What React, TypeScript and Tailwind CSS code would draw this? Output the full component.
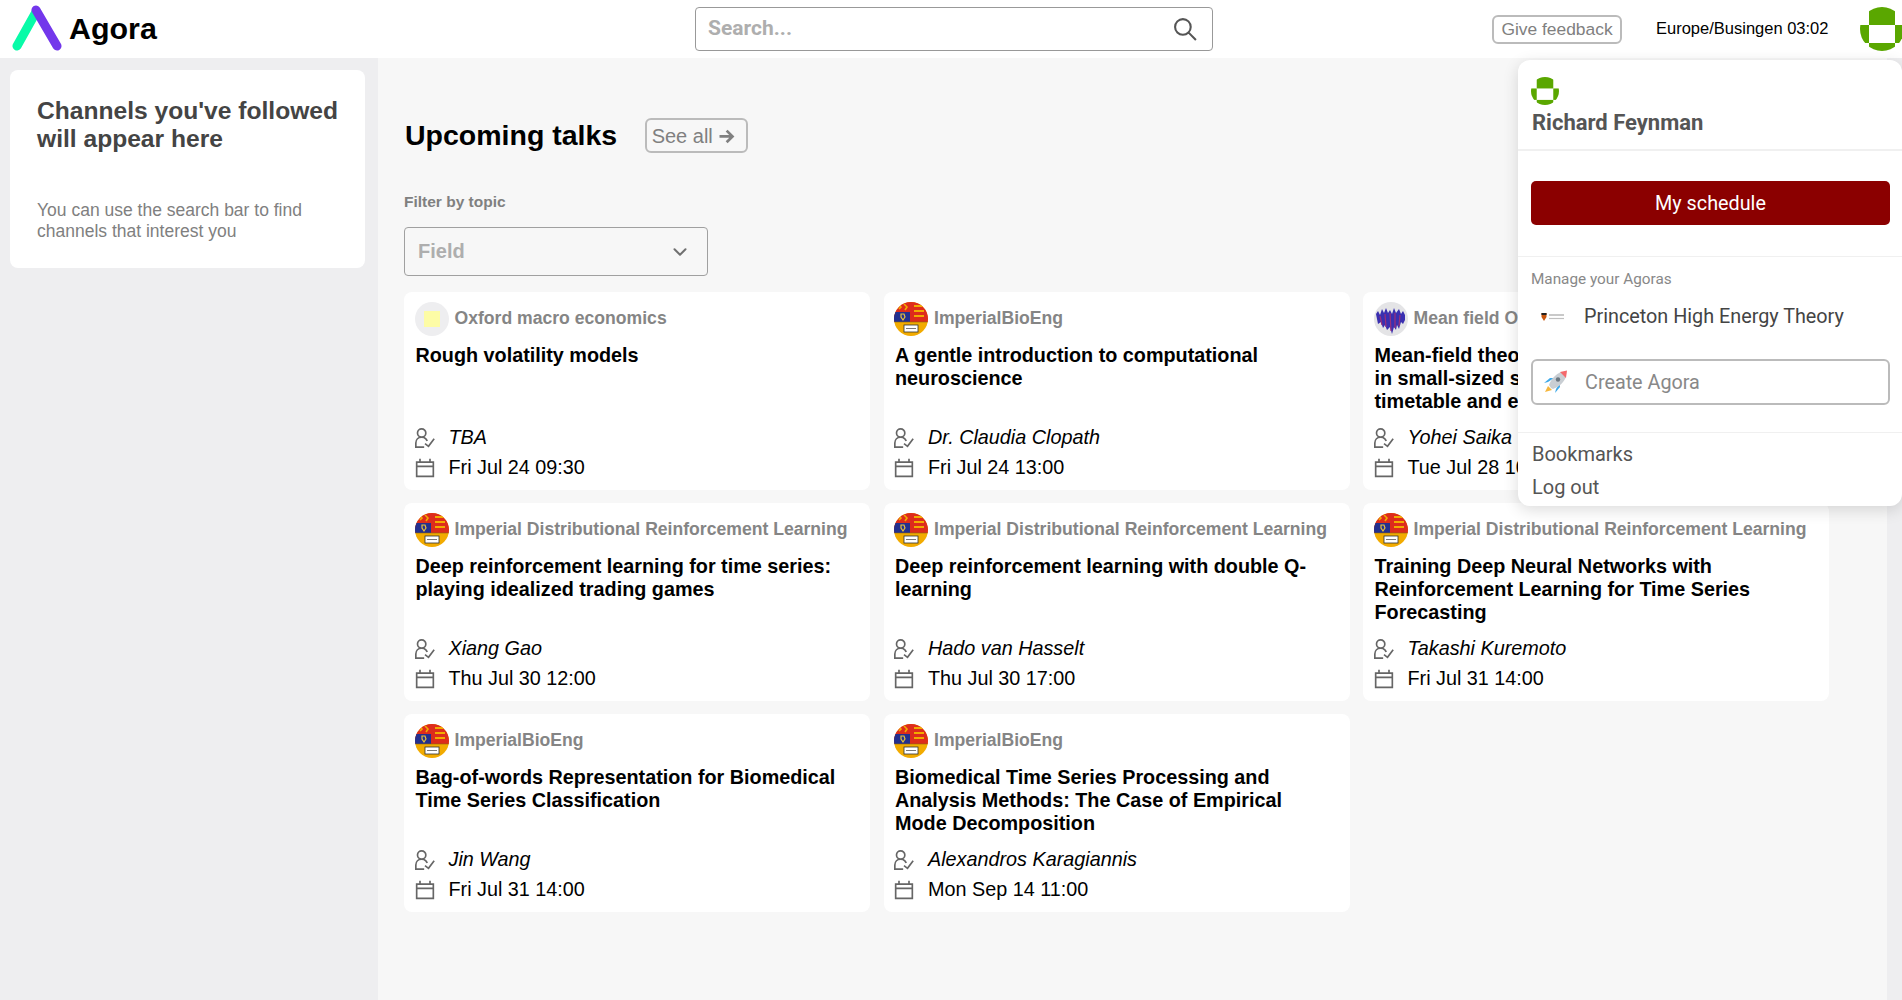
import React from "react";
import { GrUserExpert, GrCalendar, GrSearch, GrFormNextLink } from "react-icons/gr";
import { ChevronDown } from "lucide-react";

function UserAvatar({ className, id }: { className: string; id: string }) {
  return (
    <svg viewBox="0 0 44 44" className={className}>
      <clipPath id={id}><circle cx="22" cy="22" r="22" /></clipPath>
      <g clipPath={`url(#${id})`} fill="#5aa700">
        <rect x="9" y="0" width="26" height="18" />
        <rect x="0" y="18" width="9" height="18" />
        <rect x="35" y="18" width="9" height="18" />
        <rect x="9" y="36" width="26" height="8" />
      </g>
    </svg>
  );
}

function Logo() {
  return (
    <svg viewBox="0 0 50 48" className="w-[50px] h-[48px] shrink-0">
      <path d="M5 42 L24 8" stroke="#08fba8" strokeWidth="9" strokeLinecap="round" fill="none" />
      <path d="M24 6 L45 42" stroke="#7337eb" strokeWidth="9" strokeLinecap="round" fill="none" />
    </svg>
  );
}

function ImperialAvatar() {
  return (
    <svg viewBox="0 0 34 34" className="w-[34px] h-[34px] shrink-0">
      <clipPath id="imp"><circle cx="17" cy="17" r="17" /></clipPath>
      <g clipPath="url(#imp)">
        <rect width="34" height="34" fill="#f2ab00" />
        <rect width="34" height="20" fill="#dd2c1c" />
        <rect y="10" width="16" height="10" fill="#23308f" />
        <path d="M7 12 L10 12 L11 15 L9 18 L7 15 Z" fill="none" stroke="#e9c23a" strokeWidth="1.2" />
        <path d="M4 3l3 2 -2 2M10 2l3 3 -2 3" stroke="#f2ab00" strokeWidth="1.6" fill="none" />
        <path d="M20 4h10M20 9h10M20 14h10" stroke="#f2ab00" strokeWidth="2" />
        <path d="M0 20h34" stroke="#8a6a10" strokeWidth="0.6" />
        <rect x="10" y="23" width="14" height="7" fill="#fff" stroke="#333" strokeWidth="0.8" />
        <path d="M12 26.500h10" stroke="#555" strokeWidth="0.8" />
      </g>
    </svg>
  );
}

function OxfordAvatar() {
  return (
    <div className="w-[34px] h-[34px] shrink-0 rounded-full bg-[#eeeef0] flex items-center justify-center">
      <div className="w-4 h-4 bg-[#fdfca6]" />
    </div>
  );
}

function MeanFieldAvatar() {
  return (
    <svg viewBox="0 0 34 34" className="w-[34px] h-[34px] shrink-0">
      <circle cx="17" cy="17" r="17" fill="#e4e4e6" />
      <path d="M2 12 L4 9 L6 13 L8 7 L10 11 L12 6 L14 11 L16 8 L18 12 L20 6 L22 11 L25 7 L27 12 L29 9 L31 13 L31 18 L29 22 L27 20 L25 27 L23 23 L22 28 L20 25 L18 32 L16 25 L13 28 L11 23 L9 26 L7 20 L4 22 Z" fill="#3a2fb0" />
      <path d="M6 14 L8 23 M11 12 L12 25 M16 11 L17 29 M21 11 L21 26 M26 13 L25 24" stroke="#9a2f7a" strokeWidth="1.2" />
    </svg>
  );
}

function Rocket() {
  return (
    <svg viewBox="0 0 26 24" className="w-[26px] h-6 shrink-0">
      <path d="M2 22 L5 16 L9 20 Z" fill="#f6b73c" />
      <path d="M5 12 L1 13 L7 8 L11 8 Z" fill="#3fa9e8" />
      <path d="M13 19 L12 23 L17 17 L17 13 Z" fill="#3fa9e8" />
      <path d="M8 18 L6 15 C8 9 13 4 18 2 L23 7 C21 12 16 17 10 19 Z" fill="#c9ced3" />
      <path d="M17 2 L24 0.5 L23 8 Z" fill="#f4686c" />
      <circle cx="15" cy="9.5" r="2.2" fill="#6b7780" />
    </svg>
  );
}

function PrincetonMini() {
  return (
    <svg viewBox="0 0 25 8" className="w-[25px] h-2 shrink-0">
      <path d="M0.500 0h5v4l-2.500 4l-2.500-4z" fill="#c9560e" />
      <path d="M0.500 0h5v2h-5z" fill="#222" />
      <path d="M8 2h15" stroke="#a5a5a5" strokeWidth="1.2" />
      <path d="M8 5.500h15" stroke="#c0c0c0" strokeWidth="1.2" />
    </svg>
  );
}

type Talk = { avatar: React.ReactNode; channel: string; title: React.ReactNode; speaker: string; date: string };

const imperialDRL = "Imperial Distributional Reinforcement Learning";
const talks: Talk[] = [
  { avatar: <OxfordAvatar />, channel: "Oxford macro economics", title: "Rough volatility models", speaker: "TBA", date: "Fri Jul 24 09:30" },
  { avatar: <ImperialAvatar />, channel: "ImperialBioEng", title: "A gentle introduction to computational neuroscience", speaker: "Dr. Claudia Clopath", date: "Fri Jul 24 13:00" },
  { avatar: <MeanFieldAvatar />, channel: "Mean field Optimization", title: <>Mean-field theory of optimization problems<br />in small-sized systems with a fixed<br />timetable and external noise</>, speaker: "Yohei Saika", date: "Tue Jul 28 10:00" },
  { avatar: <ImperialAvatar />, channel: imperialDRL, title: "Deep reinforcement learning for time series: playing idealized trading games", speaker: "Xiang Gao", date: "Thu Jul 30 12:00" },
  { avatar: <ImperialAvatar />, channel: imperialDRL, title: "Deep reinforcement learning with double Q-learning", speaker: "Hado van Hasselt", date: "Thu Jul 30 17:00" },
  { avatar: <ImperialAvatar />, channel: imperialDRL, title: "Training Deep Neural Networks with Reinforcement Learning for Time Series Forecasting", speaker: "Takashi Kuremoto", date: "Fri Jul 31 14:00" },
  { avatar: <ImperialAvatar />, channel: "ImperialBioEng", title: "Bag-of-words Representation for Biomedical Time Series Classification", speaker: "Jin Wang", date: "Fri Jul 31 14:00" },
  { avatar: <ImperialAvatar />, channel: "ImperialBioEng", title: "Biomedical Time Series Processing and Analysis Methods: The Case of Empirical Mode Decomposition", speaker: "Alexandros Karagiannis", date: "Mon Sep 14 11:00" },
];

function TalkCard({ t }: { t: Talk }) {
  return (
    <div className="h-[198px] bg-white rounded-lg pt-[10px] pb-[7px] px-[10.5px] flex flex-col">
      <div className="flex items-center gap-[6px] h-[34px]">
        {t.avatar}
        <span className="mb-px text-[17.6px] font-bold text-[#858585] whitespace-nowrap">{t.channel}</span>
      </div>
      <div className="mt-[8px] ml-px text-[19.8px] leading-[23px] font-bold text-black pr-5">{t.title}</div>
      <div className="mt-auto flex items-center h-[30px]">
        <GrUserExpert className="w-5 h-5 shrink-0 [&_path]:stroke-[#666]" />
        <span className="ml-[14px] text-[19.8px] italic text-black">{t.speaker}</span>
      </div>
      <div className="flex items-center h-[30px]">
        <GrCalendar className="w-5 h-5 shrink-0 [&_path]:stroke-[#666]" />
        <span className="ml-[14px] text-[19.8px] text-black">{t.date}</span>
      </div>
    </div>
  );
}

export default function App() {
  return (
    <div className="relative h-[1000px] overflow-hidden bg-white font-['Liberation_Sans',sans-serif]">
      <header className="h-[58px] flex items-center bg-white">
        <div className="w-[695px] shrink-0 flex items-center pl-[12px]">
          <div className="mt-[-2px]"><Logo /></div>
          <span className="ml-[7px] text-[30.4px] font-bold text-black">Agora</span>
        </div>
        <div className="w-[518px] shrink-0 h-[44px] border border-[#999] rounded-[4px] flex items-center justify-between pl-3 pr-[14px]">
          <span className="font-['Roboto',sans-serif] font-bold text-[21px] text-[#aeaeae]">Search...</span>
          <GrSearch className="w-[25px] h-[25px] [&_path]:stroke-[#555]" />
        </div>
        <button className="ml-[279px] w-[130px] shrink-0 h-[29px] border-2 border-[#bbb] rounded-[6px] text-[17.4px] leading-[22px] text-[#808080] flex items-center justify-center whitespace-nowrap">Give feedback</button>
        <span className="ml-[34px] w-[172px] shrink-0 mb-[2px] text-[16.5px] text-black whitespace-nowrap">Europe/Busingen 03:02</span>
        <UserAvatar id="av1" className="ml-[32px] w-[44px] h-[44px] shrink-0" />
      </header>

      <div className="flex h-[942px] bg-[#eeeef0]">
        <aside className="w-[378px] shrink-0 pt-[12px] pl-[10px] pr-[13px]">
          <div className="h-[198px] bg-white rounded-lg pl-[27px] pr-1 pt-[27px]">
            <h2 className="text-[24.6px] leading-[28px] font-bold text-[#444]">Channels you've followed will appear here</h2>
            <p className="mt-[47px] text-[17.5px] leading-[21px] text-[#808080]">You can use the search bar to find channels that interest you</p>
          </div>
        </aside>
        <main className="w-[1509px] shrink-0 bg-[#f7f7f7] pl-[26px] pt-[60px]">
          <div className="flex items-center h-[35px]">
            <h1 className="ml-px text-[28.5px] font-bold text-black">Upcoming talks</h1>
            <button className="ml-[28px] w-[103px] h-[35px] border-2 border-[#bbb] rounded-[6px] pr-[3px] text-[20px] text-[#808080] flex items-center justify-center">See all<GrFormNextLink className="w-[26px] h-[26px] [&_path]:stroke-[#808080] [&_path]:stroke-[2.5]" /></button>
          </div>
          <div className="mt-[40px] text-[15.5px] leading-[18px] font-bold text-[#808080]">Filter by topic</div>
          <div className="mt-[16px] w-[304px] h-[49px] border border-[#a0a0a0] rounded-[4px] flex items-center justify-between pl-[13px] pr-[16px]">
            <span className="mb-[2px] text-[20px] font-bold text-[#aeaeae]">Field</span>
            <ChevronDown className="w-[22px] h-[22px] text-[#707070]" strokeWidth={2.2} />
          </div>
          <div className="mt-[16px] grid grid-cols-[repeat(3,466px)] gap-x-[13.5px] gap-y-[13px]">
            {talks.map((t, i) => <TalkCard key={i} t={t} />)}
          </div>
        </main>
      </div>

      <div className="absolute top-[60px] right-0 w-[384px] h-[446px] bg-white rounded-xl shadow-[0_4px_16px_rgba(0,0,0,0.14)] font-['Roboto',sans-serif]">
        <div className="h-[91px] border-b-2 border-[#f0f0f0] pl-[13px] pt-[17px]">
          <UserAvatar id="av2" className="w-[28px] h-[28px]" />
          <div className="ml-px text-[22px] leading-[28px] font-bold text-[#555] mt-[4px]">Richard Feynman</div>
        </div>
        <div className="h-[106px] border-b border-[#f0f0f0] px-[13px] pt-[30px]">
          <button className="w-[359px] h-[44px] pt-[2px] bg-[#8b0000] rounded-[5px] text-white text-[19.8px]">My schedule</button>
        </div>
        <div className="h-[176px] border-b border-[#f0f0f0] px-[13px] pt-[12px]">
          <div className="text-[15.3px] leading-[20px] text-[#888]">Manage your Agoras</div>
          <div className="mt-[10px] h-[36px] flex items-center pl-[10px]">
            <PrincetonMini />
            <span className="ml-[18px] text-[19.8px] text-[#444]">Princeton High Energy Theory</span>
          </div>
          <div className="mt-[24px] w-[359px] h-[46px] border-2 border-[#bbb] rounded-[6px] flex items-center pl-[10px]">
            <Rocket />
            <span className="ml-[16px] mt-[2px] text-[19.8px] text-[#888]">Create Agora</span>
          </div>
        </div>
        <div className="px-[14px] pt-[4px] text-[20px] text-[#555]">
          <div className="h-[33px] flex items-center">Bookmarks</div>
          <div className="h-[33px] flex items-center">Log out</div>
        </div>
      </div>
    </div>
  );
}
